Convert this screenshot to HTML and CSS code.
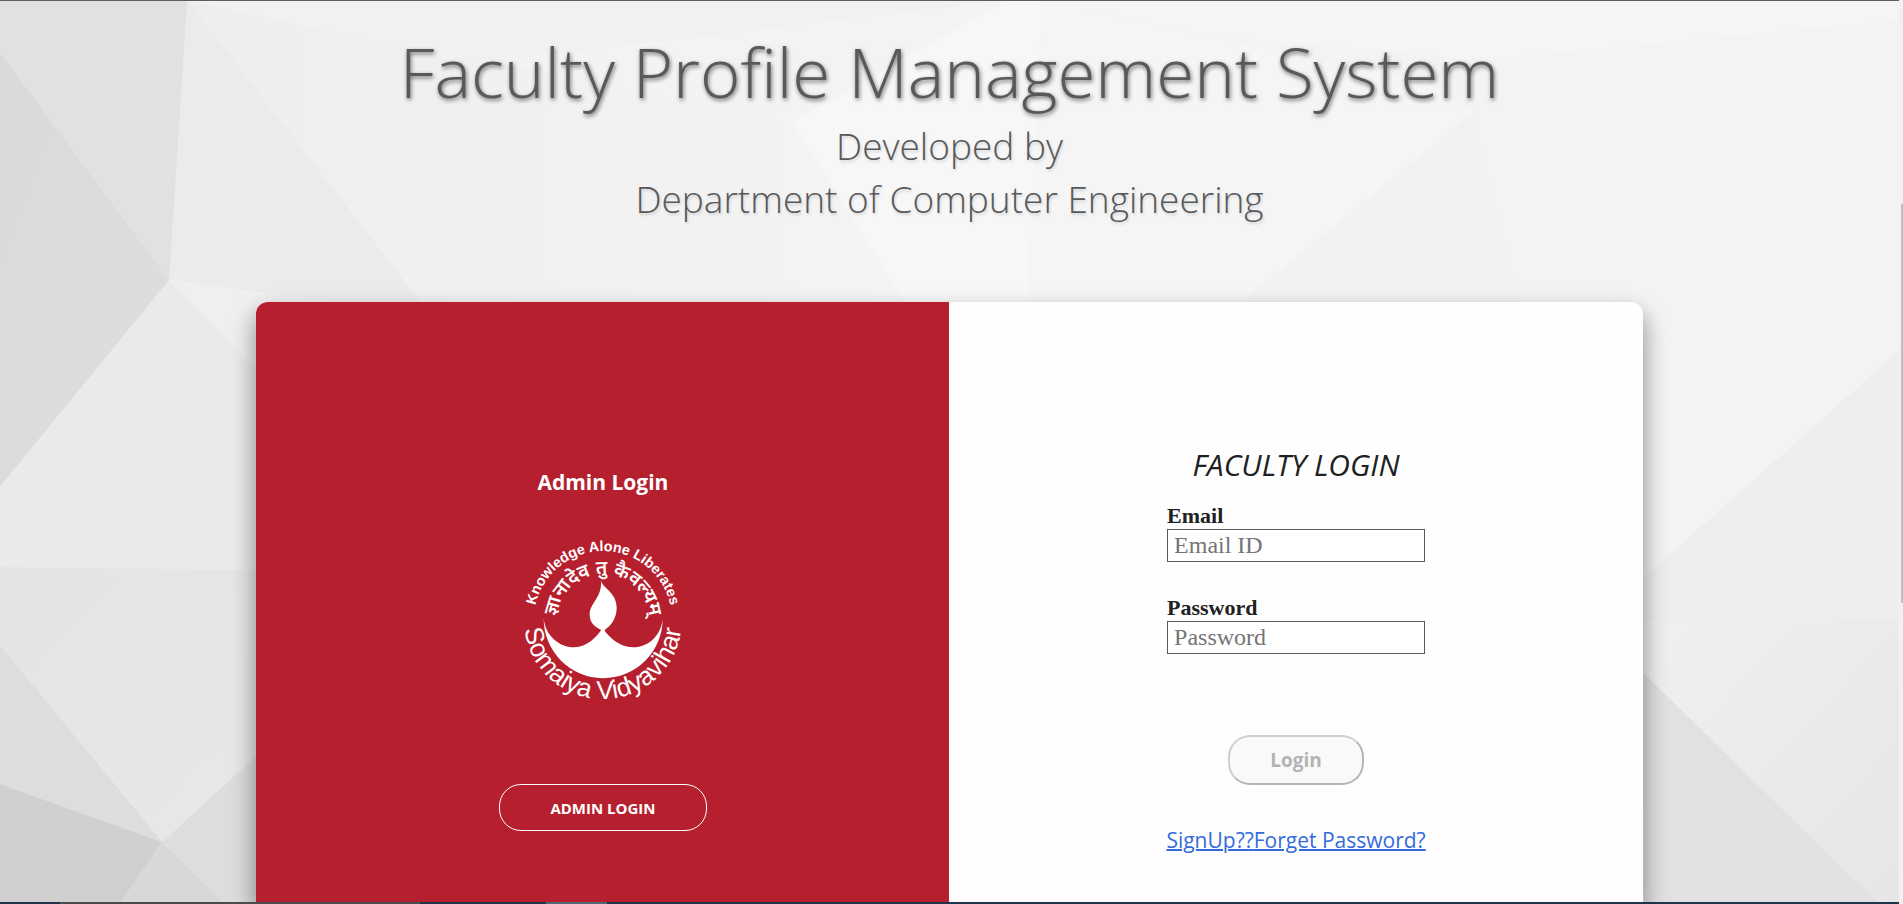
FILE: index.html
```html
<!DOCTYPE html>
<html lang="en">
<head>
<meta charset="utf-8">
<title>Faculty Profile Management System</title>
<link rel="stylesheet" href="styles.css">
</head>
<body>
<svg class="backdrop" viewBox="0 0 1899 904" preserveAspectRatio="none" aria-hidden="true">
  <defs>
    <linearGradient id="right" x1="0" y1="0" x2="1" y2="1"><stop offset="0" stop-color="#f0f0f0"/><stop offset="1" stop-color="#e6e6e6"/></linearGradient>
    <linearGradient id="mid" x1="0" y1="0" x2="1" y2="0"><stop offset="0" stop-color="#eeeeee"/><stop offset="1" stop-color="#f4f4f4"/></linearGradient>
    <linearGradient id="edge" x1="0" y1="0" x2="1" y2="1"><stop offset="0" stop-color="#dadada"/><stop offset="1" stop-color="#dedede"/></linearGradient>
    <linearGradient id="low" x1="0" y1="0" x2="1" y2="1"><stop offset="0" stop-color="#e4e4e4"/><stop offset="1" stop-color="#e8e8e8"/></linearGradient>
  </defs>
  <rect width="1899" height="904" fill="#f3f3f3"/>
  <path d="M187 0L791 122L903 302L420 302Z" fill="url(#mid)"/>
  <path d="M187 0L400 47L470 64L1005 0Z" fill="#f1f1f1"/>
  <path d="M791 122L1005 0L1040 0L1025 302L903 302Z" fill="#f7f7f7"/>
  <path d="M1040 0L1430 85L1470 112L1239 302L1025 302Z" fill="#f5f5f5"/>
  <path d="M1040 0H1899V20L1480 60L1200 35Z" fill="#f5f5f5"/>
  <path d="M1470 112L1515 302H1239Z" fill="#f2f2f2"/>
  <path d="M0 0H187L169 280L0 52Z" fill="#e1e1e1"/>
  <path d="M0 52L169 280L0 487Z" fill="url(#edge)"/>
  <path d="M187 0L420 302H330L169 280Z" fill="#ebebeb"/>
  <path d="M169 280L0 487V568L260 570V370Z" fill="#eaeaea"/>
  <path d="M169 280L330 302L260 375Z" fill="#efefef"/>
  <path d="M0 567L260 570V755L162 842L0 645Z" fill="url(#low)"/>
  <path d="M0 645L162 842L0 784Z" fill="#dddddd"/>
  <path d="M0 784L162 842L120 904H0Z" fill="#d0d0d0"/>
  <path d="M162 842L225 904H120Z" fill="#d8d8d8"/>
  <path d="M162 842L260 752V904H225Z" fill="#dddddd"/>
  <path d="M1899 347L1640 578V625L1899 618Z" fill="#eeeeee"/>
  <path d="M1640 621L1899 618V904H1876L1640 673Z" fill="url(#right)"/>
  <path d="M1640 673L1876 904H1640Z" fill="#e1e1e1"/>
</svg>

<div class="page">
  <header class="heading">
    <h1>Faculty Profile Management System</h1>
    <p>Developed by</p>
    <p>Department of Computer Engineering</p>
  </header>

  <main class="card">
    <section class="admin">
      <h2>Admin Login</h2>
      <svg class="logo" viewBox="68 60 480 480" role="img" aria-label="Somaiya Vidyavihar">
        <defs>
          <path id="arc-top" d="M123 393A207 207 0 1 1 493 393"/>
          <path id="arc-motto" d="M172 330A139 139 0 1 1 444 330"/>
          <path id="arc-bottom" d="M83 230A236 236 0 1 0 533 230"/>
        </defs>
        <text class="logo-top"><textPath href="#arc-top" startOffset="50%">Knowledge Alone Liberates</textPath></text>
        <text class="logo-motto"><textPath href="#arc-motto" startOffset="50%">ज्ञानादेव तु कैवल्यम्</textPath></text>
        <text class="logo-bottom"><textPath href="#arc-bottom" startOffset="50%">Somaiya Vidyavihar</textPath></text>
        <path d="M302 180C304 204 349 215 349 264C349 296 331 318 314 329L313 332C326 350 356 381 398 382C440 383 482 350 487 297A178 178 0 0 1 130 295C135 350 180 383 222 382C260 381 288 352 302 331L302 329C285 322 268 308 268 284C268 248 306 235 302 180Z"/>
      </svg>
      <button class="admin-button" type="button">ADMIN LOGIN</button>
    </section>

    <section class="faculty">
      <form class="form">
        <h2>FACULTY LOGIN</h2>
        <label for="email">Email</label>
        <input id="email" type="email" placeholder="Email ID">
        <label for="password">Password</label>
        <input id="password" type="password" placeholder="Password">
        <button class="login-button" type="submit" disabled>Login</button>
        <nav class="links"><a href="#signup">SignUp??</a><a href="#forget">Forget Password?</a></nav>
      </form>
    </section>
  </main>
  <div class="taskbar"><i class="task-open"></i><i class="task-active"></i></div>
</div>
<div class="scrollbar"><i></i></div>
</body>
</html>
```
FILE: styles.css
```css
* {
  box-sizing: border-box;
}

body {
  margin: 0;
  height: 100vh;
  overflow: hidden;
  display: flex;
  font-family: "Open Sans", "Noto Sans", sans-serif;
  color: #212121;
  background: #f3f3f3;
}

h1,
h2,
p {
  margin: 0;
}

.backdrop {
  position: absolute;
  z-index: -1;
  top: 0;
  left: 0;
  width: 100%;
  height: 100%;
}

.page {
  flex: 1;
  min-width: 0;
  display: flex;
  flex-direction: column;
  align-items: center;
  border-top: 1px solid #5f5b64;
}

.heading {
  padding-top: 22px;
  margin-bottom: 77px;
  text-align: center;
  color: #58595b;
  font-weight: 300;
}

.heading h1 {
  font-size: 69px;
  line-height: 96px;
  font-weight: 300;
  text-shadow: 1px 2px 4px rgba(0, 0, 0, 0.55);
}

.heading p {
  font-size: 37px;
  line-height: 53px;
  text-shadow: 1px 2px 3px rgba(0, 0, 0, 0.15);
}

.card {
  flex: 1;
  min-height: 0;
  width: 73%;
  display: grid;
  grid-template-columns: 1fr 1fr;
  overflow: hidden;
  background: #fefefe;
  border-radius: 12px 12px 0 0;
  box-shadow: 0 14px 28px rgba(0, 0, 0, 0.25), 0 10px 20px rgba(0, 0, 0, 0.22);
}

.admin {
  display: flex;
  flex-direction: column;
  align-items: center;
  padding-top: 164px;
  background: #b6202e;
  color: #fff;
}

.admin h2 {
  font-size: 21px;
  line-height: 32px;
  font-weight: 700;
}

.logo {
  width: 160px;
  height: 160px;
  margin: 42px 0 84px;
  overflow: visible;
  fill: #fff;
}

.logo text {
  text-anchor: middle;
  font-family: "Liberation Sans", Arial, sans-serif;
}

.logo .logo-top {
  font-size: 43px;
  font-weight: 700;
}

.logo .logo-motto {
  font-size: 57px;
  font-weight: 600;
  font-family: "Noto Sans Devanagari", "Noto Sans", sans-serif;
}

.logo .logo-bottom {
  font-size: 78px;
}

button {
  font-family: inherit;
}

.admin-button {
  width: 208px;
  height: 47px;
  border: 1px solid #fff;
  border-radius: 22px;
  background: transparent;
  color: #fff;
  font-size: 15px;
  font-weight: 700;
}

.faculty {
  display: flex;
  justify-content: center;
  align-items: flex-start;
  padding-top: 141px;
}

.form {
  width: 258px;
  display: flex;
  flex-direction: column;
}

.form h2 {
  font-size: 30px;
  line-height: 44px;
  font-weight: 400;
  font-style: italic;
  text-align: center;
  margin-bottom: 16px;
}

.form label {
  font: 700 22px/26px "Liberation Serif", Georgia, serif;
}

.form input {
  width: 100%;
  height: 33px;
  margin-bottom: 33px;
  padding: 0 6px;
  border: 1px solid #58595b;
  background: #fff;
  font: 24px "Liberation Serif", Georgia, serif;
}

.form input::placeholder {
  color: #757575;
}

.login-button {
  align-self: center;
  width: 136px;
  height: 50px;
  margin: 48px 0 35px;
  border: 2px solid;
  border-color: #cfcfcf #b5b5b5 #b5b5b5 #cfcfcf;
  border-radius: 22px;
  background: #f9f9f9;
  color: #b3b3b3;
  font-size: 19px;
  font-weight: 700;
}

.links {
  display: flex;
  justify-content: center;
  font-size: 21px;
  line-height: 40px;
  white-space: nowrap;
}

.links a {
  color: #346bdb;
  text-decoration-thickness: 2px;
}

.taskbar {
  width: 100%;
  height: 2px;
  padding-left: 60px;
  display: flex;
  gap: 126px;
  background: #22344a;
}

.task-open {
  width: 360px;
  background: #4c4a4c;
}

.task-active {
  width: 61px;
  background: #526877;
}

.scrollbar {
  width: 4px;
  padding: 204px 0 301px 2px;
  display: flex;
  background: #f1f1f1;
}

.scrollbar i {
  flex: 1;
  background: #bfbfbf;
}
```
